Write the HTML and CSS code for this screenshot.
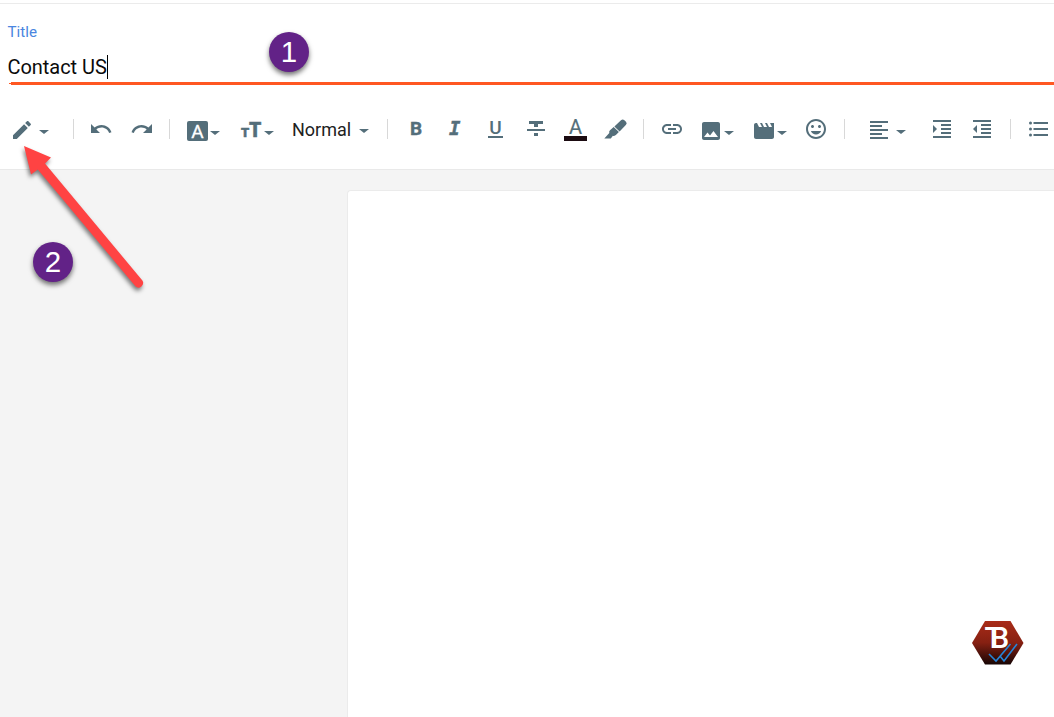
FILE: index.html
```
<!DOCTYPE html>
<html lang="en">
<head>
    <meta charset="UTF-8">
    <meta name="viewport" content="width=device-width, initial-scale=1.0">
    <title>Edit page</title>
    <link rel="stylesheet" href="styles.css">
</head>
<body>
    <header class="title-field">
        <label class="title-label">Title</label>
        <div class="title-input">Contact US<span class="cursor"></span></div>
        <div class="title-line"></div>
    </header>

    <div class="toolbar">
        <div class="tool low"><svg class="icon" viewBox="0 0 24 24"><path d="M3 17.25V21h3.75L17.81 9.94l-3.75-3.75L3 17.25zM20.71 7.04c.39-.39.39-1.02 0-1.41l-2.34-2.34c-.39-.39-1.02-.39-1.41 0l-1.83 1.83 3.75 3.75 1.83-1.83z"/></svg><span class="caret edit-caret"></span></div>
        <div class="separator"></div>
        <div class="tool"><svg class="icon" viewBox="0 0 24 24"><path d="M12.5 8c-2.65 0-5.05.99-6.9 2.6L2 7v9h9l-3.62-3.62c1.39-1.16 3.16-1.88 5.12-1.88 3.54 0 6.55 2.31 7.6 5.5l2.37-.78C21.08 11.03 17.15 8 12.5 8z"/></svg></div>
        <div class="tool"><svg class="icon" viewBox="0 0 24 24"><path d="M18.4 10.6C16.55 8.99 14.15 8 11.5 8c-4.65 0-8.58 3.03-9.96 7.22L3.9 16c1.05-3.19 4.05-5.5 7.6-5.5 1.95 0 3.73.72 5.12 1.88L13 16h9V7l-3.6 3.6z"/></svg></div>
        <div class="separator"></div>
        <div class="tool"><span class="font-box">A</span><span class="caret font-caret"></span></div>
        <div class="tool"><span class="small-t">T</span><span class="big-t">T</span><span class="caret size-caret"></span></div>
        <div class="tool"><span class="format-name">Normal</span><span class="caret format-caret"></span></div>
        <div class="separator"></div>
        <div class="tool"><span class="bold">B</span></div>
        <div class="tool"><span class="italic">I</span></div>
        <div class="tool"><span class="underline">U</span></div>
        <div class="tool"><svg class="icon" viewBox="0 0 24 24"><path d="M5 4h14v3H5zM10 7h4v3h-4zM3 12h18v2H3zM10 16h4v3h-4z"/></svg></div>
        <div class="tool"><span class="text-color">A</span></div>
        <div class="tool"><svg class="icon" viewBox="0 0 24 24"><path d="M17 3.2Q18.7 1.6 20.4 3.2L22 4.8Q23.5 6.5 21.8 8.1L15.6 14.4 10.4 9.4zM9.700 10.100l5.200 5-3 3q-1.300 1.200-3 .6L6.800 21.500H.3L5.300 16q-.6-1.500.7-2.700z"/></svg></div>
        <div class="separator"></div>
        <div class="tool"><svg class="icon" viewBox="0 0 24 24"><path d="M3.9 12c0-1.71 1.39-3.1 3.1-3.1h4V7H7c-2.76 0-5 2.24-5 5s2.24 5 5 5h4v-1.9H7c-1.71 0-3.1-1.39-3.1-3.1zM8 13h8v-2H8v2zm9-6h-4v1.9h4c1.71 0 3.1 1.39 3.1 3.1s-1.39 3.1-3.1 3.1h-4V17h4c2.76 0 5-2.24 5-5s-2.24-5-5-5z"/></svg></div>
        <div class="tool lower"><svg class="icon" viewBox="0 0 24 24"><path d="M21 19V5c0-1.1-.9-2-2-2H5c-1.1 0-2 .9-2 2v14c0 1.1.9 2 2 2h14c1.1 0 2-.9 2-2zM8.5 13.5l2.5 3.01L14.5 12l4.5 6H5l3.5-4.5z"/></svg><span class="caret media-caret"></span></div>
        <div class="tool lower"><svg class="icon" viewBox="0 0 24 24"><path d="M18 4l2 4h-3l-2-4h-2l2 4h-3l-2-4H8l2 4H7L5 4H4c-1.1 0-1.99.9-1.99 2L2 18c0 1.1.9 2 2 2h16c1.1 0 2-.9 2-2V4h-4z"/></svg><span class="caret media-caret"></span></div>
        <div class="tool"><svg class="icon" viewBox="0 0 24 24"><path d="M11.99 2C6.47 2 2 6.48 2 12s4.47 10 9.99 10C17.52 22 22 17.52 22 12S17.52 2 11.99 2zM12 20c-4.42 0-8-3.58-8-8s3.58-8 8-8 8 3.58 8 8-3.58 8-8 8zm3.5-9c.83 0 1.5-.67 1.5-1.5S16.33 8 15.5 8 14 8.67 14 9.5s.67 1.5 1.5 1.5zm-7 0c.83 0 1.5-.67 1.5-1.5S9.33 8 8.5 8 7 8.67 7 9.5 7.67 11 8.5 11zm3.5 6.5c2.33 0 4.31-1.46 5.11-3.5H6.89c.8 2.04 2.78 3.5 5.11 3.5z"/></svg></div>
        <div class="separator"></div>
        <div class="tool low"><svg class="icon" viewBox="0 0 24 24"><path d="M15 15H3v2h12v-2zm0-8H3v2h12V7zM3 13h18v-2H3v2zm0 8h18v-2H3v2zM3 3v2h18V3H3z"/></svg><span class="caret align-caret"></span></div>
        <div class="tool"><svg class="icon" viewBox="0 0 24 24"><path d="M3 21h18v-2H3v2zM3 8v8l4-4-4-4zm8 9h10v-2H11v2zM3 3v2h18V3H3zm8 6h10V7H11v2zm0 4h10v-2H11v2z"/></svg></div>
        <div class="tool"><svg class="icon" viewBox="0 0 24 24"><path d="M11 17h10v-2H11v2zm-8-5l4 4V8l-4 4zm0 9h18v-2H3v2zM3 3v2h18V3H3zm8 6h10V7H11v2zm0 4h10v-2H11v2z"/></svg></div>
        <div class="separator"></div>
        <div class="tool"><svg class="icon" viewBox="0 0 24 24"><circle cx="4.5" cy="6" r="1.5"/><circle cx="4.5" cy="12" r="1.5"/><circle cx="4.5" cy="18" r="1.5"/><path d="M7.5 5H22v2H7.5zM7.5 11H22v2H7.5zM7.5 17H22v2H7.5z"/></svg></div>
    </div>

    <main class="workspace">
        <div class="page"></div>
    </main>

    <!-- Step markers over the editor -->
    <div class="badge step-one">1</div>
    <div class="badge step-two">2</div>
    <svg class="arrow" viewBox="0 0 160 160">
        <path d="M24 6 51 17.5 45 23.500 142.400 140.500A4.600 4.600 0 0 1 135.400 146.300L37.800 29.500 31 34.500Z"/>
    </svg>

    <svg class="logo" viewBox="0 0 52 44">
        <defs>
            <linearGradient id="red" x1="0" y1="0" x2="0" y2="1">
                <stop offset="0" stop-color="#a92c18"/>
                <stop offset="0.5" stop-color="#862012"/>
                <stop offset="1" stop-color="#160504"/>
            </linearGradient>
        </defs>
        <path class="hexagon" d="M0 22 13 0H38.5L51.5 22 38.500 43.500H13Z"/>
        <text class="logo-text" x="12.500" y="26.500">TB</text>
        <path class="checks" d="M17 33 24 40 38.500 23M28 35 32 40 45 23"/>
    </svg>
</body>
</html>
```
FILE: styles.css
```
body {
    margin: 0;
    height: 717px;
    overflow: hidden;
    position: relative;
    background-color: #fff;
    font-family: Roboto, sans-serif;
    display: flex;
    flex-direction: column;
}

.title-field {
    box-sizing: border-box;
    height: 82px;
    margin-top: 3px;
    border-top: 1px solid #ebebeb;
    padding: 18px 0 0 7.5px;
    display: flex;
    flex-direction: column;
}

.title-label {
    color: #4a86e0;
    font-size: 15.2px;
    line-height: 20px;
}

.title-input {
    display: flex;
    align-items: center;
    height: 24px;
    margin-top: 13px;
    font-size: 20px;
    line-height: 24px;
    letter-spacing: -0.05px;
    color: #0b0b0b;
}

.cursor {
    width: 1px;
    height: 24px;
    background-color: #000;
}

.title-line {
    height: 3px;
    margin: 3px 0 0 3.5px;
    background-color: #ff5722;
    box-shadow: -3px 0 0 -1px #ff5722;
}

.toolbar {
    box-sizing: border-box;
    height: 85px;
    padding: 32px 0 0 10px;
    border-bottom: 1px solid #e9e9e9;
    display: grid;
    grid-template-columns: 63px 16px 40.5px 39.5px 18px 54px 51px 95px 23px 39px 39px 35.5px 40.5px 40px 39px 16.5px 39.5px 52.5px 52.5px 40px 23px 63px 40px 40px 16px 28px;
    align-items: start;
    color: #546e7a;
}

.tool {
    display: flex;
    height: 24px;
}

.low {
    margin-top: 1px;
}

.lower {
    margin-top: 2px;
}

.icon {
    width: 24px;
    height: 24px;
    flex: none;
    fill: #546e7a;
}

.separator {
    width: 1px;
    height: 20px;
    margin-top: 2px;
    background-color: #d8d8d8;
}

.caret {
    flex: none;
    width: 0;
    height: 0;
    border: 4.5px solid transparent;
    border-width: 4.5px 5px 0;
    border-top-color: #546e7a;
}

.edit-caret {
    margin: 12px 0 0 5px;
}

.font-caret {
    margin: 14px 0 0 2px;
}

.size-caret {
    margin: 14px 0 0 2px;
}

.format-caret {
    margin: 12px 0 0 10px;
}

.media-caret {
    margin: 12px 0 0 1px;
}

.align-caret {
    margin: 12px 0 0 5px;
}

.font-box {
    width: 21px;
    height: 20px;
    margin-top: 4px;
    border-radius: 2px;
    background-color: #546e7a;
    color: #fff;
    font-size: 19px;
    line-height: 21px;
    text-align: center;
    -webkit-text-stroke: 0.3px #fff;
}

.small-t {
    width: 8px;
    font-size: 13px;
    font-weight: 900;
    line-height: 31px;
    -webkit-text-stroke: 0.5px #546e7a;
}

.big-t {
    width: 13px;
    font-size: 19.5px;
    font-weight: 900;
    line-height: 27px;
    -webkit-text-stroke: 0.4px #546e7a;
}

.format-name {
    width: 57px;
    font-size: 18px;
    line-height: 26px;
    color: #212121;
}

.bold {
    font-size: 19px;
    font-weight: 700;
    line-height: 23px;
    -webkit-text-stroke: 0.4px #546e7a;
}

.italic {
    font: italic bold 19px/23px "DejaVu Sans Mono", monospace;
    -webkit-text-stroke: 0.4px #546e7a;
}

.underline {
    width: 15px;
    height: 19px;
    border-bottom: 2px solid #546e7a;
    font-size: 19px;
    font-weight: 500;
    line-height: 22px;
    text-align: center;
}

.text-color {
    width: 23px;
    height: 19px;
    border-bottom: 5px solid #1b0b11;
    font-size: 20px;
    line-height: 21px;
    text-align: center;
    -webkit-text-stroke: 0.2px #546e7a;
}

.workspace {
    flex: 1;
    background-color: #f4f4f4;
    padding: 20px 0 0 347px;
    display: flex;
}

.page {
    flex: 1;
    background-color: #fff;
    border: 1px solid #ebebeb;
    border-right: 0;
    border-bottom: 0;
    border-radius: 4px 0 0 0;
}

.badge {
    position: absolute;
    width: 40px;
    height: 40px;
    border-radius: 50%;
    background-color: #622287;
    color: #fff;
    font: 29.5px/40px "Liberation Sans", Arial, sans-serif;
    text-align: center;
    box-shadow: 0 3px 5px rgba(0, 0, 0, 0.55);
}

.step-one {
    left: 269px;
    top: 32px;
}

.step-two {
    left: 33px;
    top: 242px;
}

.arrow {
    position: absolute;
    left: 0;
    top: 140px;
    width: 160px;
    height: 160px;
    fill: #ff4343;
    filter: drop-shadow(-1px 3px 2px rgba(0, 0, 0, 0.5));
}

.logo {
    position: absolute;
    left: 972px;
    top: 621px;
    width: 52px;
    height: 44px;
    overflow: visible;
}

.hexagon {
    fill: url(#red);
}

.logo-text {
    fill: #fff;
    font-family: Roboto, sans-serif;
    font-size: 30px;
    font-weight: 500;
    letter-spacing: -12.5px;
}

.checks {
    fill: none;
    stroke: #2585d8;
    stroke-width: 1.6;
}
```
